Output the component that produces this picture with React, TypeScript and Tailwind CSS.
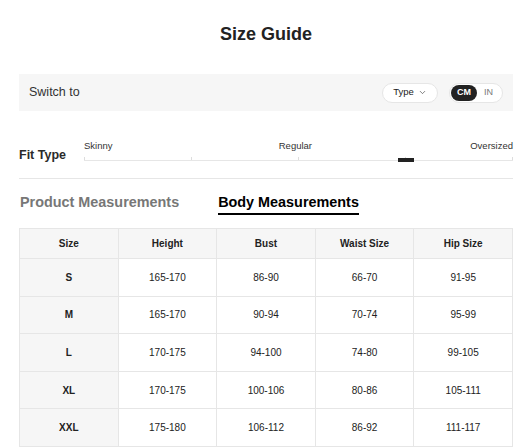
import { ChevronDown } from "lucide-react";

const rows = [
  { size: "S", height: "165-170", bust: "86-90", waist: "66-70", hip: "91-95" },
  { size: "M", height: "165-170", bust: "90-94", waist: "70-74", hip: "95-99" },
  { size: "L", height: "170-175", bust: "94-100", waist: "74-80", hip: "99-105" },
  { size: "XL", height: "170-175", bust: "100-106", waist: "80-86", hip: "105-111" },
  { size: "XXL", height: "175-180", bust: "106-112", waist: "86-92", hip: "111-117" },
];

const headers = ["Size", "Height", "Bust", "Waist Size", "Hip Size"];

export default function App() {
  return (
    <div
      className="w-[520px] h-[448px] overflow-hidden bg-white pl-[19px] pr-[7px] text-[#222]"
      style={{ fontFamily: '"Liberation Sans", Arial, sans-serif' }}
    >
      {/* Title */}
      <h1 className="mt-[23px] h-[22px] text-center text-[18px] font-bold leading-[22px] text-[#222]">
        Size Guide
      </h1>

      {/* Unit switch bar */}
      <div className="mt-[29px] flex h-[37px] items-center justify-between bg-[#f6f6f6] pl-[10px] pr-[10px]">
        <span className="text-[12.5px] text-[#333]">Switch to</span>
        <div className="flex items-center gap-[11px]">
          <button className="flex h-[20px] w-[56px] items-center justify-center gap-[4px] rounded-full border border-[#e6e6e6] bg-white text-[9.5px] text-[#222]">
            Type
            <ChevronDown className="h-[9px] w-[9px] text-[#444]" strokeWidth={1.8} />
          </button>
          <div className="flex h-[20px] w-[54px] items-center rounded-full border border-[#e6e6e6] bg-white pl-[1px]">
            <span className="flex h-[16px] w-[26px] items-center justify-center rounded-full bg-[#222] text-[9px] font-bold text-white">
              CM
            </span>
            <span className="flex-1 pr-[2px] text-center text-[9px] text-[#777]">IN</span>
          </div>
        </div>
      </div>

      {/* Fit type */}
      <div className="mt-[29px] flex items-end">
        <span className="mb-[-2px] w-[65px] text-[12.5px] font-bold leading-[15px] text-[#2a2a2a]">Fit Type</span>
        <div className="flex-1">
          <div className="flex h-[11px] justify-between text-[9.5px] leading-[11px] text-[#333]">
            <span>Skinny</span>
            <span className="pl-[8px]">Regular</span>
            <span>Oversized</span>
          </div>
          <div className="relative mt-[6px] flex h-[4px] items-start justify-between border-b border-[#e6e6e6]">
            <div className="h-[3px] w-px bg-[#ddd]" />
            <div className="h-[3px] w-px bg-[#ddd]" />
            <div className="h-[3px] w-px bg-[#ddd]" />
            <div className="h-[3px] w-px bg-[#ddd]" />
            <div className="h-[3px] w-px bg-[#ddd]" />
            <div className="absolute left-[75%] top-[1px] h-[4px] w-[16px] -translate-x-1/2 bg-[#222]" />
          </div>
        </div>
      </div>

      <div className="mt-[17px] h-px bg-[#e6e6e6]" />

      {/* Tabs */}
      <div className="mt-[15px] flex gap-[39px] pl-[1px] text-[14.4px] font-bold leading-[16px]">
        <span className="text-[#777]">Product Measurements</span>
        <span className="border-b-2 border-black pb-[3px] text-black">Body Measurements</span>
      </div>

      {/* Table */}
      <table className="mt-[13px] w-[494px] table-fixed border-collapse text-center text-[10px] text-[#222]">
        <thead>
          <tr className="h-[30px] bg-[#f6f6f6]">
            {headers.map((h) => (
              <th key={h} className="border border-[#e6e6e6] font-bold">
                {h}
              </th>
            ))}
          </tr>
        </thead>
        <tbody>
          {rows.map((r) => (
            <tr key={r.size} className="h-[37.6px]">
              <td className="border border-[#e6e6e6] bg-[#f6f6f6] font-bold">{r.size}</td>
              <td className="border border-[#e6e6e6]">{r.height}</td>
              <td className="border border-[#e6e6e6]">{r.bust}</td>
              <td className="border border-[#e6e6e6]">{r.waist}</td>
              <td className="border border-[#e6e6e6]">{r.hip}</td>
            </tr>
          ))}
        </tbody>
      </table>
    </div>
  );
}
